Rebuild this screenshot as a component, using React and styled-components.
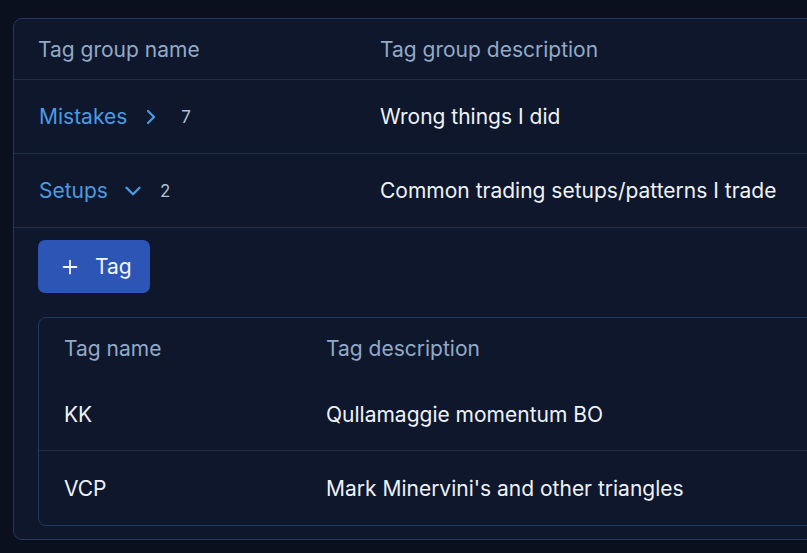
import React from "react";
import styled, { createGlobalStyle } from "styled-components";
import { ChevronRight, ChevronDown, Plus } from "lucide-react";

const GlobalStyle = createGlobalStyle`
  html, body {
    margin: 0;
    background: #0a101e;
    overflow: hidden;
  }
  body {
    font-family: Inter, "Noto Sans", "Liberation Sans", sans-serif;
  }
  *, *::before, *::after {
    box-sizing: border-box;
  }
`;

const Page = styled.div`
  padding: 18px 0 0 13px;
  width: 1100px;
`;

const Card = styled.div`
  width: 1000px;
  background: #0e172b;
  border: 1px solid #243a5b;
  border-radius: 9px;
  overflow: hidden;
`;

const Row = styled.div`
  display: grid;
  grid-template-columns: ${(p) => p.$first}px 1fr;
  align-items: center;
  height: ${(p) => p.$h}px;
  border-bottom: ${(p) => (p.$line ? "1px solid #1f2f4a" : "none")};
`;

const Cell = styled.div`
  padding: 0 ${(p) => p.$pad || 25}px;
  font-size: 21px;
  color: ${(p) => (p.$head ? "#92aac8" : "#eef2f8")};
  display: flex;
  align-items: center;
  white-space: nowrap;
`;

const GroupLink = styled.span`
  color: #4a9be3;
  margin-left: 1px;
`;

const Toggle = styled.span`
  display: inline-flex;
  color: #4a9be3;
  margin-left: ${(p) => p.$ml}px;
`;

const Count = styled.span`
  font-size: 17px;
  color: #aebfd8;
  margin-left: ${(p) => p.$ml}px;
`;

const Expanded = styled.div`
  padding: 12px 25px 13px 24px;
`;

const AddButton = styled.button`
  display: flex;
  align-items: center;
  gap: 14px;
  height: 53px;
  width: 112px;
  padding: 0 0 0 21px;
  border: none;
  border-radius: 7px;
  background: #2d55b6;
  color: #f3f6fb;
  font-family: inherit;
  font-size: 21px;
  cursor: pointer;
`;

const InnerCard = styled.div`
  margin-top: 24px;
  background: #0e172b;
  border: 1px solid #243a5b;
  border-radius: 8px;
  overflow: hidden;
`;

const groups = [
  { name: "Mistakes", count: 7, desc: "Wrong things I did", open: false },
  { name: "Setups", count: 2, desc: "Common trading setups/patterns I trade", open: true },
];

const tags = [
  { name: "KK", desc: "Qullamaggie momentum BO" },
  { name: "VCP", desc: "Mark Minervini's and other triangles" },
];

export default function App() {
  return (
    <>
      <GlobalStyle />
      <Page>
        <Card>
          <Row $first={342} $h={61} $line>
            <Cell $head $pad={24}>Tag group name</Cell>
            <Cell $head $pad={24}>Tag group description</Cell>
          </Row>
          {groups.map((g) => (
            <Row key={g.name} $first={342} $h={74} $line>
              <Cell $pad={24}>
                <GroupLink>{g.name}</GroupLink>
                {g.open ? (
                  <>
                    <Toggle $ml={12}>
                      <ChevronDown size={26} strokeWidth={2.2} />
                    </Toggle>
                    <Count $ml={14}>{g.count}</Count>
                  </>
                ) : (
                  <>
                    <Toggle $ml={12}>
                      <ChevronRight size={24} strokeWidth={2.2} />
                    </Toggle>
                    <Count $ml={18}>{g.count}</Count>
                  </>
                )}
              </Cell>
              <Cell $pad={24}>{g.desc}</Cell>
            </Row>
          ))}
          <Expanded>
            <AddButton>
              <Plus size={22} strokeWidth={2} />
              Tag
            </AddButton>
            <InnerCard>
              <Row $first={262} $h={60}>
                <Cell $head>Tag name</Cell>
                <Cell $head>Tag description</Cell>
              </Row>
              {tags.map((t, i) => (
                <Row key={t.name} $first={262} $h={i === 0 ? 73 : 74} $line={i === 0}>
                  <Cell>{t.name}</Cell>
                  <Cell>{t.desc}</Cell>
                </Row>
              ))}
            </InnerCard>
          </Expanded>
        </Card>
      </Page>
    </>
  );
}
